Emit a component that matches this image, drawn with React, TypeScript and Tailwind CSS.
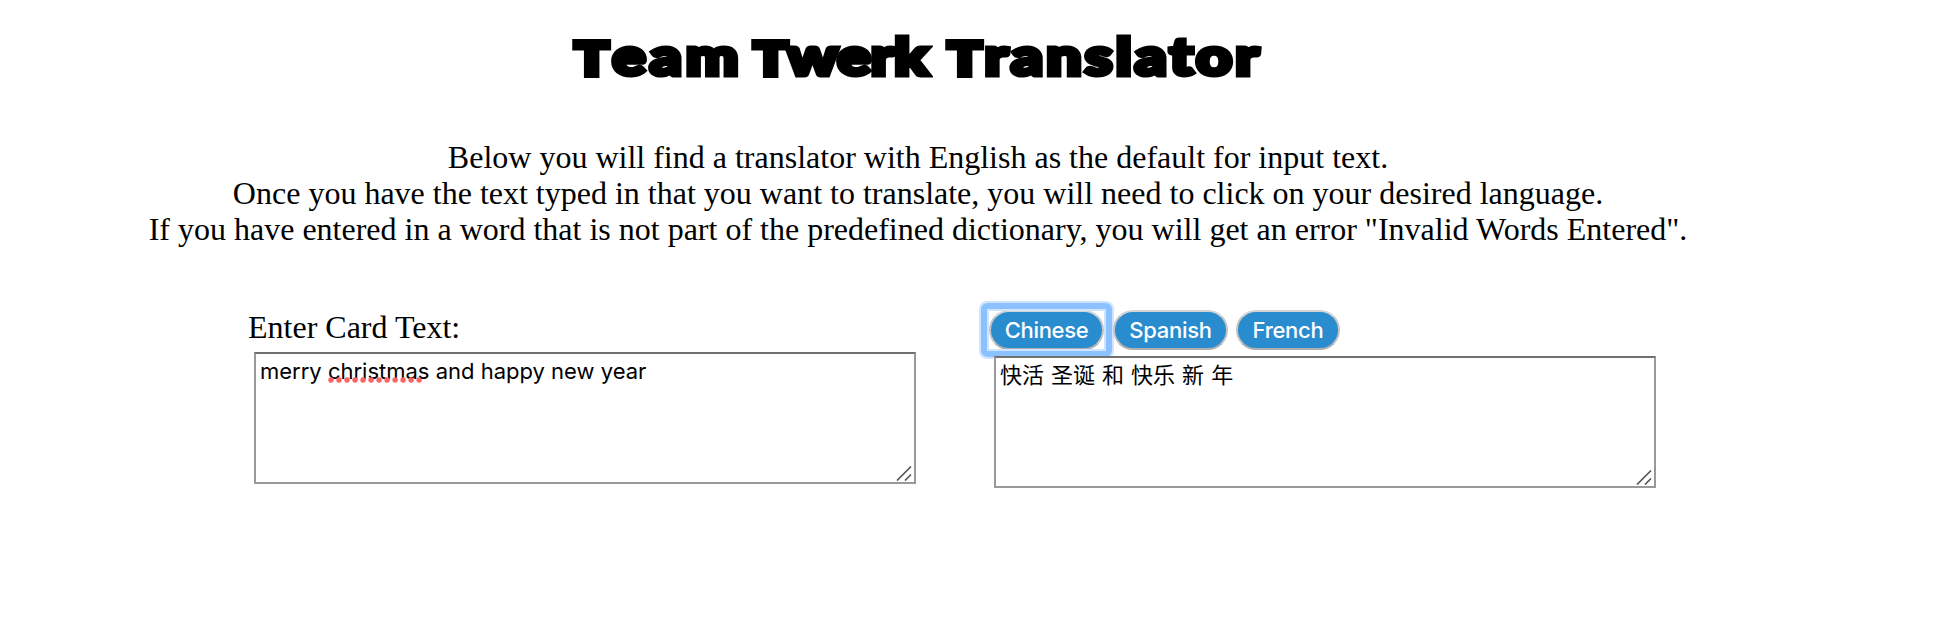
import type { ReactNode } from "react";

function Grip() {
  return (
    <svg className="absolute right-[2px] bottom-[1px] h-[16px] w-[16px]" viewBox="0 0 16 16" fill="none" stroke="#555" strokeWidth="1.7">
      <path d="M1 15.5 15 1.5M9 15.5l6-6" />
    </svg>
  );
}

function Box({ className, children }: { className: string; children: ReactNode }) {
  return (
    <div className={`relative h-[132px] w-[662px] border-2 border-[#999] border-t-[#707070] bg-white px-[4px] whitespace-nowrap text-black ${className}`}>
      {children}
      <Grip />
    </div>
  );
}

function LangButton({ label, className, focused }: { label: string; className: string; focused?: boolean }) {
  return (
    <button
      className={`relative h-[40px] rounded-full border-2 border-[#c4c4c4] border-t-[#d4d4d4] border-b-[#b0b0b0] bg-[#298cce] text-center font-['Inter',sans-serif] font-medium text-[22px] leading-[36px] tracking-[-0.3px] whitespace-nowrap text-white outline-none ${className}`}
    >
      {label}
      {focused && (
        <span className="absolute -inset-x-[12px] -inset-y-[11px] rounded-[8px] border-2 border-[#cfe5ff]">
          <span className="block h-full w-full rounded-[6px] border-[6px] border-[#8bc1ff]">
            <span className="block h-full w-full border-2 border-[#cfe5ff]" />
          </span>
        </span>
      )}
    </button>
  );
}

function TitleWord({ initial, rest, className }: { initial: string; rest: string; className: string }) {
  return (
    <span className={`inline-block h-[64px] origin-left scale-x-[1.2] ${className}`}>
      <span className="text-[46px] [-webkit-text-stroke:6px_black]">{initial}</span>
      <span className="text-[52px]">{rest}</span>
    </span>
  );
}

export default function App() {
  return (
    <main className="h-[630px] w-[1944px] overflow-hidden bg-white font-['Liberation_Serif',serif] text-black">
      <header className="w-[1836px] pt-[23px] text-center">
        <h1 className="flex h-[64px] pl-[575px] text-left font-['Lato',sans-serif] leading-[64px] font-black whitespace-nowrap [-webkit-text-stroke:5px_black]">
          <TitleWord initial="T" rest="eam" className="w-[179px] tracking-[3.3px]" />
          <TitleWord initial="T" rest="werk" className="w-[194px] tracking-[0px]" />
          <TitleWord initial="T" rest="ranslator" className="w-[320px] tracking-[2.7px]" />
        </h1>
        <p className="mt-[52px] text-[32px] leading-[36px] whitespace-nowrap">
          Below you will find a translator with English as the default for input text.
          <br />
          Once you have the text typed in that you want to translate, you will need to click on your desired language.
          <br />
          If you have entered in a word that is not part of the predefined dictionary, you will get an error "Invalid Words Entered".
        </p>
      </header>
      <div className="flex pt-[60px] pl-[248px]">
        <section className="w-[741px]">
          <label className="block h-[45px] pt-[2px] text-[32px] leading-[36px]">Enter Card Text:</label>
          <Box className="ml-[6px] pt-[2px] font-['Inter',sans-serif] text-[22px] leading-[30px]">
            <span>merry </span>
            <span className="relative">
              christmas
              <svg className="absolute top-[19px] left-0 h-[6px] w-[96px]" viewBox="0 0 96 6">
                <path d="M3 3H94" stroke="#ff6262" strokeWidth="5.4" strokeLinecap="round" strokeDasharray="0.01 8" />
              </svg>
            </span>
            <span> and happy new year</span>
          </Box>
        </section>
        <section>
          <div className="flex h-[49px] pt-[3px]">
            <LangButton label="Chinese" focused className="w-[115px]" />
            <LangButton label="Spanish" className="ml-[9px] w-[115px]" />
            <LangButton label="French" className="ml-[8px] w-[104px]" />
          </div>
          <Box className="ml-[5px] font-['Noto_Sans_CJK_SC',sans-serif] text-[22px] leading-[30px] [word-spacing:2.1px]">
            快活 圣诞 和 快乐 新 年
          </Box>
        </section>
      </div>
    </main>
  );
}
